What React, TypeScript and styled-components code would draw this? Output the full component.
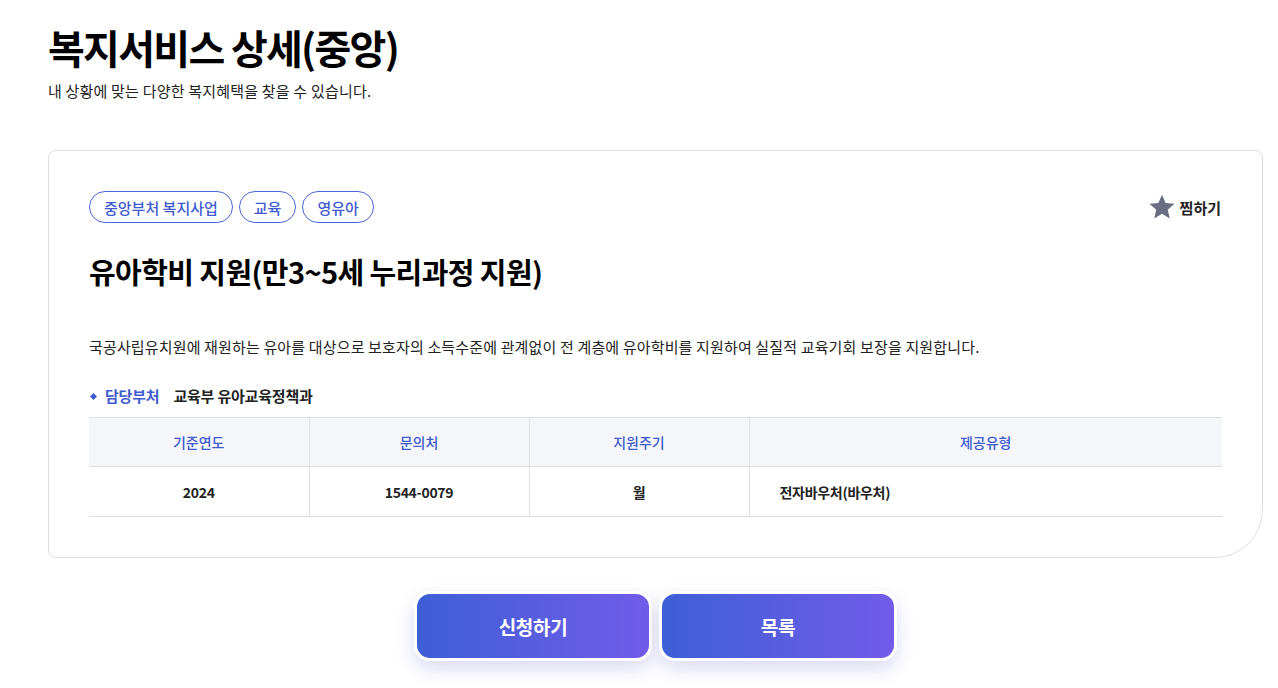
import React from "react";
import styled, { createGlobalStyle } from "styled-components";

const Global = createGlobalStyle`
  html, body { margin: 0; padding: 0; background: #fff; }
  body { font-family: "Noto Sans CJK KR", "Noto Sans", sans-serif; color: #111; }
  * { box-sizing: border-box; }
`;

const Page = styled.div`
  padding: 19px 0 40px 48px;
  width: 1263px;
`;

const Title = styled.h1`
  margin: 0;
  font-size: 40px;
  font-weight: 700;
  line-height: 56px;
  letter-spacing: -1.7px;
  color: #000;
`;

const Sub = styled.p`
  margin: 6px 0 0;
  font-size: 15px;
  line-height: 20px;
  color: #222;
  letter-spacing: 0.2px;
`;

const Card = styled.section`
  margin-top: 49px;
  border: 1px solid #dedede;
  border-radius: 8px 8px 48px 8px;
  padding: 40px;
  display: flex;
  flex-direction: column;
`;

const TopRow = styled.div`
  display: flex;
  justify-content: space-between;
  align-items: center;
`;

const Tags = styled.div`
  display: flex;
  gap: 6px;
`;

const Tag = styled.span`
  height: 32px;
  padding: 0 14px;
  border: 1px solid #4a67d6;
  border-radius: 16px;
  display: inline-flex;
  align-items: center;
  font-size: 15px;
  font-weight: 500;
  color: #3f5bcf;
`;

const Fav = styled.button`
  display: flex;
  align-items: center;
  gap: 4px;
  border: 0;
  background: none;
  padding: 0;
  margin-right: 1px;
  font-family: inherit;
  font-size: 15px;
  font-weight: 700;
  color: #222;
  cursor: pointer;
`;

const ItemTitle = styled.h2`
  margin: 28px 0 0;
  font-size: 29px;
  font-weight: 700;
  line-height: 40px;
  letter-spacing: -0.6px;
  color: #000;
`;

const Desc = styled.p`
  margin: 44px 0 0;
  font-size: 15px;
  line-height: 24px;
  color: #222;
  letter-spacing: 0.15px;
`;

const Dept = styled.div`
  margin-top: 26px;
  display: flex;
  align-items: center;
  font-size: 15px;
  font-weight: 700;
  line-height: 22px;
  letter-spacing: -0.2px;
`;

const Bullet = styled.span`
  width: 5px;
  height: 5px;
  background: #3f5bcf;
  transform: rotate(45deg);
  margin: 0 9px 0 2px;
`;

const DeptLabel = styled.span`
  color: #3f5bcf;
  margin-right: 14px;
`;

const DeptValue = styled.span`
  color: #222;
`;

const Table = styled.table`
  margin-top: 10px;
  width: 100%;
  border-collapse: collapse;
  table-layout: fixed;
  border-top: 1px solid #e0e0e4;
`;

const Th = styled.th`
  height: 49px;
  background: #f5f6fa;
  border-bottom: 1px solid #dcdce0;
  border-left: 1px solid #e0e0e4;
  font-size: 14px;
  font-weight: 500;
  color: #3f5bcf;
  text-align: center;
  &:first-child { border-left: 0; }
`;

const Td = styled.td<{ $left?: boolean }>`
  height: 50px;
  border-bottom: 1px solid #dcdce0;
  border-left: 1px solid #e0e0e4;
  font-size: 14px;
  font-weight: 700;
  color: #222;
  letter-spacing: -0.3px;
  text-align: ${(p) => (p.$left ? "left" : "center")};
  padding: ${(p) => (p.$left ? "0 30px" : "0")};
  &:first-child { border-left: 0; }
`;

const Buttons = styled.div`
  width: 1215px;
  display: flex;
  justify-content: center;
  gap: 7px;
  margin-top: 33px;
`;

const Btn = styled.button`
  width: 238px;
  height: 70px;
  border: 3px solid #fff;
  border-radius: 16px;
  background: linear-gradient(90deg, #3d5fd6 0%, #725ce9 100%);
  color: #fff;
  font-family: inherit;
  font-size: 19px;
  font-weight: 700;
  letter-spacing: -0.3px;
  box-shadow: 0 8px 18px rgba(90, 90, 200, 0.22);
  cursor: pointer;
`;

const StarIcon = () => (
  <svg width="28" height="28" viewBox="0 0 24 24" aria-hidden>
    <path
      d="M12 1.5l3.1 7.1 7.7.6-5.9 5.1 1.8 7.6L12 17.8l-6.7 4.1 1.8-7.6-5.9-5.1 7.7-.6z"
      fill="#6b6e82"
    />
  </svg>
);

export default function App() {
  return (
    <>
      <Global />
      <Page>
        <Title>복지서비스 상세(중앙)</Title>
        <Sub>내 상황에 맞는 다양한 복지혜택을 찾을 수 있습니다.</Sub>
        <Card>
          <TopRow>
            <Tags>
              <Tag>중앙부처 복지사업</Tag>
              <Tag>교육</Tag>
              <Tag>영유아</Tag>
            </Tags>
            <Fav>
              <StarIcon />
              찜하기
            </Fav>
          </TopRow>
          <ItemTitle>유아학비 지원(만3~5세 누리과정 지원)</ItemTitle>
          <Desc>
            국공사립유치원에 재원하는 유아를 대상으로 보호자의 소득수준에 관계없이 전 계층에 유아학비를 지원하여 실질적 교육기회 보장을 지원합니다.
          </Desc>
          <Dept>
            <Bullet />
            <DeptLabel>담당부처</DeptLabel>
            <DeptValue>교육부 유아교육정책과</DeptValue>
          </Dept>
          <Table>
            <colgroup>
              <col style={{ width: 220 }} />
              <col style={{ width: 220 }} />
              <col style={{ width: 220 }} />
              <col />
            </colgroup>
            <thead>
              <tr>
                <Th>기준연도</Th>
                <Th>문의처</Th>
                <Th>지원주기</Th>
                <Th>제공유형</Th>
              </tr>
            </thead>
            <tbody>
              <tr>
                <Td>2024</Td>
                <Td>1544-0079</Td>
                <Td>월</Td>
                <Td $left>전자바우처(바우처)</Td>
              </tr>
            </tbody>
          </Table>
        </Card>
        <Buttons>
          <Btn>신청하기</Btn>
          <Btn>목록</Btn>
        </Buttons>
      </Page>
    </>
  );
}
